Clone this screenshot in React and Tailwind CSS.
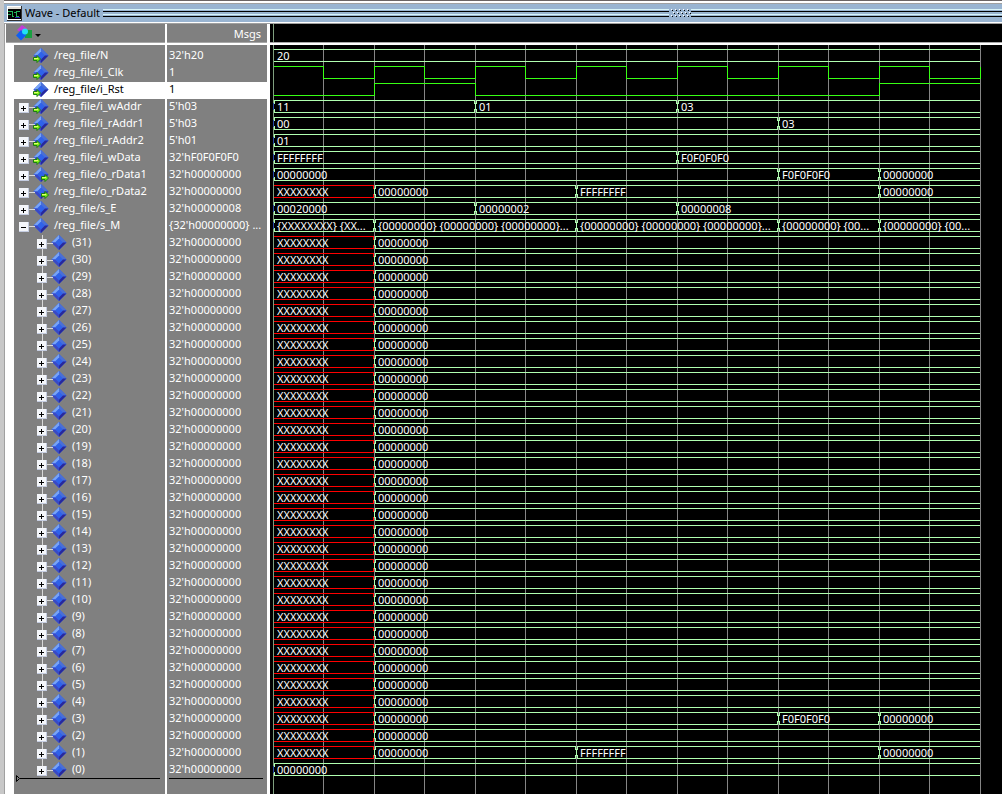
const GREEN = '#b0ffb0';
const LOGIC = '#37ff14';
const RED = '#ff0000';
const START = 273;
const END = 980;
const PERIOD = 101;
const ROW = 17;

const ZERO = '00000000';
const UNKNOWN = 'XXXXXXXX';

const topSignals = [
  { name: '/reg_file/N', value: "32'h20", port: 'in', wave: 'const', segments: [[0, '20']] },
  { name: '/reg_file/i_Clk', value: '1', port: 'in', wave: 'clock' },
  { name: '/reg_file/i_Rst', value: '1', port: 'in', wave: 'reset', selected: true },
  { name: '/reg_file/i_wAddr', value: "5'h03", port: 'in', box: '+', segments: [[0, '11'], [2, '01'], [4, '03']] },
  { name: '/reg_file/i_rAddr1', value: "5'h03", port: 'in', box: '+', segments: [[0, '00'], [5, '03']] },
  { name: '/reg_file/i_rAddr2', value: "5'h01", port: 'in', box: '+', segments: [[0, '01']] },
  { name: '/reg_file/i_wData', value: "32'hF0F0F0F0", port: 'in', box: '+', segments: [[0, 'FFFFFFFF'], [4, 'F0F0F0F0']] },
  { name: '/reg_file/o_rData1', value: "32'h00000000", port: 'out', box: '+', segments: [[0, ZERO], [5, 'F0F0F0F0'], [6, ZERO]] },
  { name: '/reg_file/o_rData2', value: "32'h00000000", port: 'out', box: '+', segments: [[0, UNKNOWN], [1, ZERO], [3, 'FFFFFFFF'], [6, ZERO]] },
  { name: '/reg_file/s_E', value: "32'h00000008", box: '+', segments: [[0, '00020000'], [2, '00000002'], [4, '00000008']] },
  {
    name: '/reg_file/s_M',
    value: "{32'h00000000} ...",
    box: '-',
    segments: [
      [0, '{XXXXXXXX} {XX...'],
      [1, '{00000000} {00000000} {00000000}...'],
      [3, '{00000000} {00000000} {00000000}...'],
      [5, '{00000000} {00...'],
      [6, '{00000000} {00...'],
    ],
  },
];

const overrides = {
  3: [[0, UNKNOWN], [1, ZERO], [5, 'F0F0F0F0'], [6, ZERO]],
  1: [[0, UNKNOWN], [1, ZERO], [3, 'FFFFFFFF'], [6, ZERO]],
  0: [[0, ZERO]],
};

const registers = Array.from({ length: 32 }, (_, i) => {
  const n = 31 - i;
  return {
    name: `(${n})`,
    value: "32'h00000000",
    box: '+',
    child: true,
    last: n === 0,
    segments: overrides[n] || [[0, UNKNOWN], [1, ZERO]],
  };
});

const signals = [...topSignals, ...registers];

function Diamond({ port }) {
  return (
    <svg width="16" height="15" viewBox="0 0 16 15" className="shrink-0" aria-hidden="true">
      <path d="M8 0 L15.500 7.500 L8 15 L.5 7.500Z" fill="#2f62ea" />
      <path d="M8 0 L.5 7.500 L4 7.500 L8 3.500Z" fill="#78a4f6" />
      <path d="M8 0 L15.500 7.500 L12 7.500 L8 3.500Z" fill="#4a6fd6" />
      <path d="M.5 7.500 L8 15 L8 11.500 L4 7.500Z" fill="#3a48c4" />
      <path d="M15.500 7.500 L8 15 L8 11.500 L12 7.500Z" fill="#28289c" />
      {port && (
        <g transform={port === 'in' ? 'translate(0 7)' : 'translate(8 7)'}>
          <path d="M.5 2.500 H4 V.5 L7.500 4 L4 7.500 V5.500 H.5Z" fill="#7df01a" stroke="#1d7a12" strokeWidth="1" />
          <path d="M1 3.500 H5" stroke="#e4ff70" strokeWidth="1" />
        </g>
      )}
    </svg>
  );
}

function ExpandBox({ sign, label }) {
  return (
    <button type="button" aria-label={label} className="block h-[11px] w-[10px] shrink-0">
      <svg width="10" height="11" viewBox="0 0 10 11" shapeRendering="crispEdges">
        <rect width="10" height="10" y="1" fill="#f4f6fa" />
        <path d="M0 10.500 H10 M9.500 1 V11" stroke="#c4cce0" />
        <path d="M2 6.500 H7" stroke="#000" />
        {sign === '+' && <path d="M4.500 4 V9" stroke="#000" />}
      </svg>
    </button>
  );
}

function NameRow({ signal }) {
  const { name, port, box, child, last, selected } = signal;
  return (
    <li className={`flex h-[17px] items-start ${selected ? 'bg-white text-black' : 'text-white'} ${child ? 'pl-[23px]' : 'pl-[5px]'}`}>
      <span className="relative flex h-[17px] w-[14px] shrink-0 items-center">
        {child && <span className={`absolute left-[5px] top-0 w-px bg-[#d8d8d8] ${last ? 'h-2' : 'h-[17px]'}`} />}
        {box && <span className="absolute left-[10px] top-2 h-px w-[6px] bg-[#d8d8d8]" />}
        {box && (
          <span className="relative">
            <ExpandBox sign={box} label={`${box === '+' ? 'Expand' : 'Collapse'} ${name}`} />
          </span>
        )}
      </span>
      <Diamond port={port} />
      <span className="pl-[5px]">{name}</span>
    </li>
  );
}

function Bus({ segments, top, plain }) {
  const bottom = top + 12;
  return segments.map(([start, text], i) => {
    const x0 = START + start * PERIOD;
    const x1 = i + 1 < segments.length ? START + segments[i + 1][0] * PERIOD : END;
    const color = text === UNKNOWN ? RED : GREEN;
    const closed = x1 < END;
    let d = `M${x0 + 1} ${top + 0.5}H${x1} M${x0 + 1} ${bottom + 0.5}H${x1}`;
    if (!plain && color !== RED) d += ` M${x0 + 1.5} ${top}v4 M${x0 + 1.5} ${bottom - 3}v4`;
    if (closed) d += ` M${x1 - 0.5} ${top}v4 M${x1 - 0.5} ${bottom - 3}v4`;
    return (
      <g key={start}>
        <path d={d} stroke={color} />
        {!plain && start > 0 && <path d={`M${x0 + 0.5} ${top + 3}v7`} stroke={GREEN} />}
        {!plain && start === 0 && color === GREEN && <path d={`M${x0 + 0.5} ${top + 3}v7`} stroke="#2a4ca8" />}
        <text x={x0 + 4} y={top + 11} fill="#fff" shapeRendering="auto">{text}</text>
      </g>
    );
  });
}

function Wave({ signal, index }) {
  const top = 4 + index * ROW;
  if (signal.wave === 'clock') {
    let d = `M274 ${top + 0.5}`;
    for (let i = 0; i < 7; i += 1) {
      const x = START + i * PERIOD + 0.5;
      d += `H${x + 50}V${top + 12.5}H${x + PERIOD}V${top + 0.5}`;
    }
    return <path d={d} stroke={LOGIC} fill="none" />;
  }
  if (signal.wave === 'reset') {
    const low = top + 12.5;
    const high = top + 0.5;
    return <path d={`M274 ${low}H374.500V${high}H475.500V${low}H879.500V${high}H980`} stroke={LOGIC} fill="none" />;
  }
  return <Bus segments={signal.segments} top={top} plain={signal.wave === 'const'} />;
}

function Waveform() {
  const lines = Array.from({ length: 15 }, (_, i) => START + Math.floor(i / 2) * PERIOD + (i % 2) * 50);
  return (
    <svg
      width="711"
      height="749"
      viewBox="270 45 711 749"
      role="img"
      aria-label="Signal waveforms"
      shapeRendering="crispEdges"
      className="block font-['Noto_Sans',sans-serif] text-[11px]"
    >
      {lines.map((x) => (
        <path key={x} d={`M${x + 0.5} 45V794`} stroke={x === START ? '#7f9f7f' : '#858585'} />
      ))}
      <g transform="translate(0 45)">
        {signals.map((s, i) => (
          <Wave key={s.name} signal={s} index={i} />
        ))}
      </g>
    </svg>
  );
}

function TitleBar() {
  return (
    <header className="flex h-[18px] items-center bg-[#99b4d1] pl-[3px]">
      <svg width="15" height="15" viewBox="0 0 15 15" shapeRendering="crispEdges" aria-hidden="true">
        <rect width="15" height="15" fill="#333" />
        <rect width="14" height="14" fill="#fff" />
        <rect width="13" height="10" x="1" y="3" fill="#000" />
        <rect width="13" height="2" y="1" x="1" fill="#e4e0d8" />
        <path d="M1 5.500H5V10.500H7 M7 6.500H9V10.500H12 M9 5.500H13 M1 8.500H4" stroke="#22b45a" fill="none" />
        <path d="M8 11.500H13" stroke="#2626b0" />
      </svg>
      <h1 className="pl-[3px] pr-[3px] text-[11px] leading-[18px] text-black">Wave - Default</h1>
      <div className="flex min-w-0 flex-1 items-center">
        <Stripes />
        <svg width="22" height="8" viewBox="0 0 22 8" shapeRendering="crispEdges" aria-hidden="true">
          {[0, 1, 2, 3, 4].map((c) => (
            <g key={c}>
              <path d={`M${2 + c * 4} .5h1 M${4 + c * 4} 3.500h1 M${2 + c * 4} 6.500h1`} stroke="#fff" />
              <path d={`M${3 + c * 4} 1.500h1 M${5 + c * 4} 4.500h1 M${3 + c * 4} 7.500h1`} stroke="#000" />
            </g>
          ))}
        </svg>
        <Stripes short />
      </div>
    </header>
  );
}

function Stripes({ short }) {
  return (
    <div className={`flex min-w-0 flex-col ${short ? 'w-[311px]' : 'flex-1'}`}>
      <span className="h-px bg-[#d8f4f8]" />
      <span className="mt-px h-px bg-black" />
      <span className="mt-[2px] h-px bg-[#d8f4f8]" />
      <span className="mt-px h-px bg-black" />
    </div>
  );
}

export default function App() {
  return (
    <main className="flex min-h-screen flex-col bg-[#c8c8c8] pl-[4px] font-['Noto_Sans',sans-serif] text-[11px] leading-[14px]">
      <div className="h-[4px] border-b border-t border-b-[#a0a0a0] border-t-[#6b6464] bg-white" />
      <TitleBar />
      <div className="h-[2px] border-b border-b-[#a0a0a0] bg-white" />
      <div className="flex flex-1 border-l border-l-[#a0a0a0] bg-white">
        <section className="flex w-[160px] shrink-0 flex-col pl-px">
          <div className="flex h-[19px] items-center border-b border-b-[#a8a8a8] bg-[#808080] pl-[10px]">
            <button type="button" aria-label="Object filter" className="flex items-center">
              <svg width="16" height="16" viewBox="0 0 16 16" aria-hidden="true">
                <path d="M6 0 L11 3.500 L6 8 L1 5Z" fill="#c23cd8" />
                <rect width="7" height="8" x="9" y="5" fill="#18a040" />
                <path d="M5 5 L10.500 10 L5 15.500 L0 10.500Z" fill="#1060f0" />
                <circle cx="9" cy="6.500" r="3" fill="#20e0f4" />
              </svg>
              <svg width="8" height="8" viewBox="0 0 8 8" className="ml-[2px] mt-1" aria-hidden="true">
                <path d="M1 3H7L4 6Z" fill="#000" />
              </svg>
            </button>
          </div>
          <div className="mt-[2px] flex flex-1 flex-col pl-2">
            <ul className="flex-1 bg-[#808080] pt-[3px]">
              {signals.map((s) => (
                <NameRow key={s.name} signal={s} />
              ))}
              <li className="-mt-1 flex items-center pl-[2px] pr-[5px]" aria-hidden="true">
                <svg width="4" height="7" viewBox="0 0 4 7">
                  <path d="M.5 .5V6.500L3.500 3.500Z" fill="none" stroke="#000" />
                </svg>
                <span className="h-px flex-1 bg-black" />
              </li>
            </ul>
          </div>
        </section>
        <section className="ml-[2px] flex w-[100px] shrink-0 flex-col">
          <h2 className="h-[19px] border-b border-b-[#a8a8a8] bg-[#808080] pr-[6px] text-right leading-[19px] text-white">Msgs</h2>
          <ul className="mt-[2px] flex-1 bg-[#808080] pt-[3px]">
            {signals.map((s) => (
              <li key={s.name} className={`h-[17px] pl-[2px] ${s.selected ? 'bg-white text-black' : 'text-white'}`}>
                {s.value}
              </li>
            ))}
            <li className="-mt-px ml-[2px] mr-1 h-px bg-black" aria-hidden="true" />
          </ul>
        </section>
        <section className="ml-[2px] flex min-w-0 flex-1 flex-col border-l border-l-white">
          <div className="h-[19px] border-b border-b-[#a8a8a8] bg-black pl-[3px]">
            <div className="h-full w-px bg-[#7f9f7f]" />
          </div>
          <div className="mt-[2px] flex-1 overflow-hidden bg-black">
            <Waveform />
          </div>
        </section>
      </div>
    </main>
  );
}
